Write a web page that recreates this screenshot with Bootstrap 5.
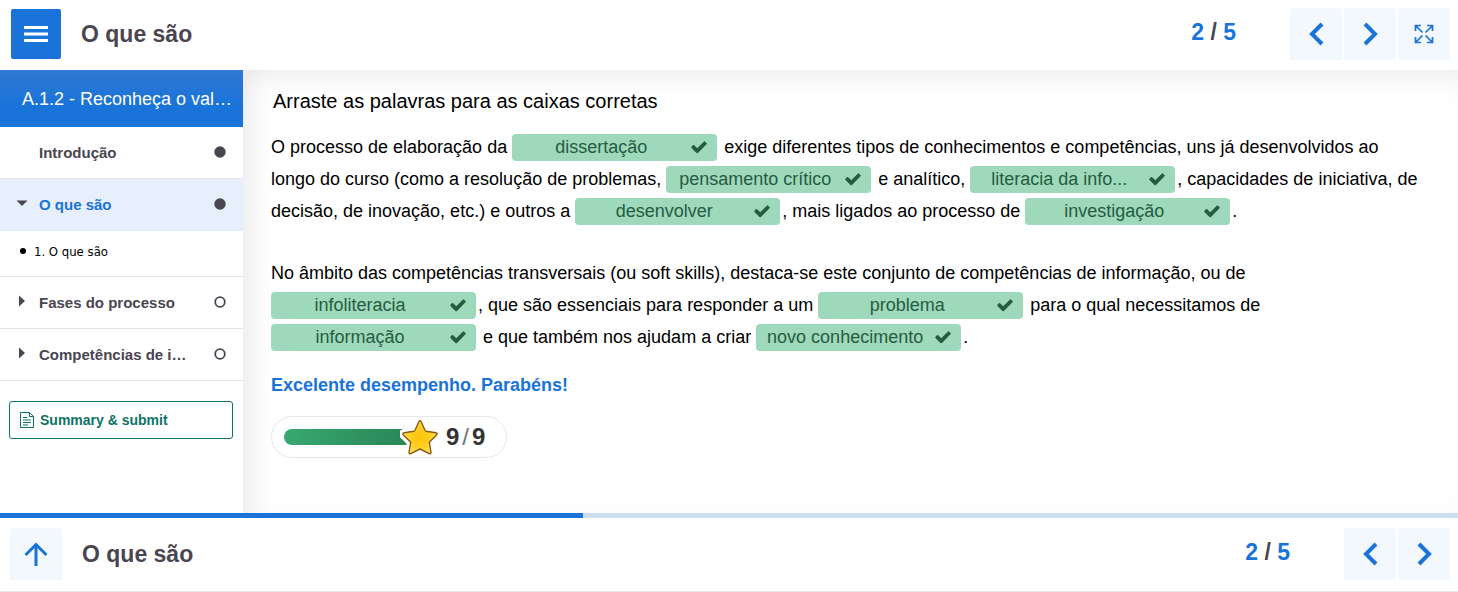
<!DOCTYPE html>
<html lang="pt">
<head>
<meta charset="utf-8">
<meta name="viewport" content="width=device-width, initial-scale=1">
<title>O que são</title>
<link href="https://cdn.jsdelivr.net/npm/bootstrap@5.3.0/dist/css/bootstrap.min.css" rel="stylesheet">
<style>
:root { --book-blue: #1a73d9; --book-ink: #4a4550; }
body { font-family: "Liberation Sans", Arial, sans-serif; color: #000; background: #fff; }
.book-title, .pager { font-size: 23px; line-height: 28px; font-weight: 700; color: var(--book-ink); }
.book-title { margin: 0 0 0 20px; }
.pager { margin: 0 54px 4px 0; }
.pager b { color: var(--book-blue); }
.topbar { height: 70px; padding: 0 8px 2px 11px; }
.bottombar { height: 74px; padding: 0 8px 1px 10px; border-bottom: 1px solid #e8e8e8; }
.menu-btn { width: 50px; height: 50px; background: var(--book-blue); border: 0; border-radius: 2px; }
.tool-btn { width: 52px; height: 52px; background: #f2f8fd; border: 0; border-radius: 3px; color: var(--book-blue); }
.side { width: 243px; background: #fff; }
.side-head { height: 57px; line-height: 58px; padding: 0 6px 0 22px; font-size: 18px; color: #fff; background: linear-gradient(#3079d2, #1a73d9 60%); }
.chapter { height: 52px; padding: 0 17px 0 16px; font-size: 15px; line-height: 24px; font-weight: 700; color: var(--book-ink); border-bottom: 1px solid #e4e4e4; text-decoration: none; }
.chapter .caret { width: 12px; margin-right: 11px; margin-bottom: 4px; }
.chapter .name { margin-right: 24px; }
.chapter.current { background: #e6effb; color: var(--book-blue); border-color: #e6effb; }
.section-link { height: 46px; padding: 0 20px 4px; font: 13px "DejaVu Sans Condensed", "DejaVu Sans", sans-serif; font-stretch: condensed; color: #000; border-bottom: 1px solid #e4e4e4; text-decoration: none; }
.submit-btn { height: 38px; margin: 20px 10px 0 9px; padding: 0 10px; font-size: 14px; font-weight: 700; color: #0e7366; background: #fff; border: 1px solid #0e7366; border-radius: 3px; gap: 6px; }
.page { padding: 17px 34px 55px 28px; box-shadow: inset 12px 10px 32px -8px #e6e6e6; }
.task { font-size: 20px; line-height: 28px; margin: 0 0 16px 2px; }
.cloze { font-size: 18px; line-height: 32px; margin: 0 0 30px; }
.drop { width: 205px; height: 27px; line-height: 27px; margin-right: 2px; background: #9fd9bb; color: #255c41; border-radius: 4px; vertical-align: middle; margin-top: -2px; }
.drop svg { margin-right: 9px; }
.feedback { font-size: 18px; line-height: 24px; font-weight: 700; color: var(--book-blue); margin: -10px 0 19px; }
.score { width: 236px; height: 42px; border: 1px solid #e8e8e8; border-radius: 21px; background: #fff; padding: 0 12px; }
.score-track { width: 136px; height: 16px; }
.score-fill { height: 16px; border-radius: 8px; background: linear-gradient(90deg, #38a871, #278355); }
.star { right: -20px; top: -12px; }
.score-text { font-size: 24px; line-height: 28px; font-weight: 700; color: #333; margin-left: 26px; gap: 3px; }
.reading { height: 5px; border-radius: 0; background: #cfdff2; }
.reading .progress-bar { background: var(--book-blue); }
</style>
</head>
<body>
<svg width="0" height="0" class="d-none" aria-hidden="true">
  <symbol id="tick" viewBox="0 0 1792 1792"><path fill="currentColor" d="M1671 566q0 40-28 68l-724 724-136 136q-28 28-68 28t-68-28l-136-136-362-362q-28-28-28-68t28-68l136-136q28-28 68-28t68 28l294 295 656-657q28-28 68-28t68 28l136 136q28 28 28 68z"/></symbol>
  <symbol id="prev" viewBox="0 0 24 24"><path d="M18 2 8 12l10 10" fill="none" stroke="currentColor" stroke-width="4"/></symbol>
  <symbol id="next" viewBox="0 0 24 24"><path d="M7 2l10 10L7 22" fill="none" stroke="currentColor" stroke-width="4"/></symbol>
</svg>

<header class="topbar d-flex align-items-center">
  <button class="menu-btn d-flex align-items-center justify-content-center" aria-label="Menu"><svg class="flex-shrink-0" width="24" height="18"><path d="M0 2.5h24M0 9h24M0 15.500h24" stroke="#fff" stroke-width="3"/></svg></button>
  <h1 class="book-title me-auto">O que são</h1>
  <div class="pager"><b>2</b> / <b>5</b></div>
  <div class="d-flex" style="gap:2px">
    <button class="tool-btn d-flex align-items-center justify-content-center p-0" aria-label="Anterior"><svg width="24" height="24"><use href="#prev"/></svg></button>
    <button class="tool-btn d-flex align-items-center justify-content-center p-0" aria-label="Seguinte"><svg width="24" height="24"><use href="#next"/></svg></button>
    <button class="tool-btn d-flex align-items-center justify-content-center p-0" aria-label="Ecrã inteiro"><svg width="20" height="20" fill="none" stroke="currentColor" stroke-width="1.700"><path d="M1.500 7V1.500H7M13 1.500h5.500V7M18.500 13v5.500H13M7 18.500H1.500V13M2 2l6.500 6.500M18 2l-6.500 6.500M18 18l-6.500-6.500M2 18l6.500-6.500"/></svg></button>
  </div>
</header>

<div class="d-flex align-items-stretch">
  <nav class="side flex-shrink-0">
    <div class="side-head text-nowrap">A.1.2 - Reconheça o val…</div>
    <a class="chapter d-flex align-items-center" href="#"><span class="caret"></span><span class="name flex-grow-1 text-nowrap">Introdução</span><svg class="flex-shrink-0" width="12" height="14"><circle cx="6" cy="6" r="5.700" fill="#4a4550"/></svg></a>
    <a class="chapter current d-flex align-items-center" href="#"><svg class="caret flex-shrink-0" width="12" height="12"><path d="M.5 3.500h11L6 9z" fill="#4a4550"/></svg><span class="name flex-grow-1 text-nowrap">O que são</span><svg class="flex-shrink-0" width="12" height="14"><circle cx="6" cy="6" r="5.700" fill="#4a4550"/></svg></a>
    <a class="section-link d-flex align-items-center" href="#"><svg class="me-2" width="6" height="8"><circle cx="3" cy="3" r="3"/></svg>1. O que são</a>
    <a class="chapter d-flex align-items-center" href="#"><svg class="caret flex-shrink-0" width="12" height="12"><path d="M3 .5v11L9 6z" fill="#4a4550"/></svg><span class="name flex-grow-1 text-nowrap">Fases do processo</span><svg class="flex-shrink-0" width="12" height="14"><circle cx="6" cy="6" r="4.800" fill="none" stroke="#4a4550" stroke-width="1.800"/></svg></a>
    <a class="chapter d-flex align-items-center" href="#"><svg class="caret flex-shrink-0" width="12" height="12"><path d="M3 .5v11L9 6z" fill="#4a4550"/></svg><span class="name flex-grow-1 text-nowrap">Competências de i…</span><svg class="flex-shrink-0" width="12" height="14"><circle cx="6" cy="6" r="4.800" fill="none" stroke="#4a4550" stroke-width="1.800"/></svg></a>
    <div class="d-grid"><button class="submit-btn d-flex align-items-center"><svg width="14" height="16" fill="none" stroke="currentColor"><path d="M.5.5h9l4 4v11H.5zM9.500.5v4h4M3 5.500h4M3 8h8M3 10.500h8M3 13h5"/></svg>Summary &amp; submit</button></div>
  </nav>

  <main class="page flex-grow-1">
    <p class="task">Arraste as palavras para as caixas corretas</p>
    <p class="cloze">O processo de elaboração da <span class="drop d-inline-flex align-items-center"><span class="flex-grow-1 text-center">dissertação</span><svg width="18" height="18"><use href="#tick"/></svg></span> exige diferentes tipos de conhecimentos e competências, uns já desenvolvidos ao longo do curso (como a resolução de problemas, <span class="drop d-inline-flex align-items-center"><span class="flex-grow-1 text-center">pensamento crítico</span><svg width="18" height="18"><use href="#tick"/></svg></span> e analítico, <span class="drop d-inline-flex align-items-center"><span class="flex-grow-1 text-center">literacia da info...</span><svg width="18" height="18"><use href="#tick"/></svg></span>, capacidades de iniciativa, de decisão, de inovação, etc.) e outros a <span class="drop d-inline-flex align-items-center"><span class="flex-grow-1 text-center">desenvolver</span><svg width="18" height="18"><use href="#tick"/></svg></span>, mais ligados ao processo de <span class="drop d-inline-flex align-items-center"><span class="flex-grow-1 text-center">investigação</span><svg width="18" height="18"><use href="#tick"/></svg></span>.</p>
    <p class="cloze">No âmbito das competências transversais (ou soft skills), destaca-se este conjunto de competências de informação, ou de <span class="drop d-inline-flex align-items-center"><span class="flex-grow-1 text-center">infoliteracia</span><svg width="18" height="18"><use href="#tick"/></svg></span>, que são essenciais para responder a um <span class="drop d-inline-flex align-items-center"><span class="flex-grow-1 text-center">problema</span><svg width="18" height="18"><use href="#tick"/></svg></span> para o qual necessitamos de <span class="drop d-inline-flex align-items-center"><span class="flex-grow-1 text-center">informação</span><svg width="18" height="18"><use href="#tick"/></svg></span> e que também nos ajudam a criar <span class="drop d-inline-flex align-items-center"><span class="flex-grow-1 text-center">novo conhecimento</span><svg width="18" height="18"><use href="#tick"/></svg></span>.</p>
    <p class="feedback">Excelente desempenho. Parabéns!</p>
    <div class="score d-flex align-items-center">
      <div class="score-track position-relative">
        <div class="score-fill" style="width:100%"></div>
        <svg class="star position-absolute" width="40" height="40" viewBox="0 0 40 40" stroke-linejoin="round">
          <defs><radialGradient id="gold"><stop offset="0" stop-color="#ffc20a"/><stop offset=".6" stop-color="#ffcf24"/><stop offset="1" stop-color="#ffdf60"/></radialGradient></defs>
          <path d="M20 4l4.700 9.500c.3.600.6.800 1.200.9l10 1.500c1.200.2 1.500 1.200.7 2.100l-7.300 7.200 1.700 10.300c.2 1.200-.7 1.800-1.800 1.300L20 32l-9.200 4.800c-1.100.5-2-.1-1.800-1.300l1.700-10.300L3.400 18c-.8-.9-.5-1.900.7-2.100l10-1.500c.6-.1.9-.3 1.200-.9z" fill="#fff" stroke="#fff" stroke-width="8"/>
          <path d="M19 4.500c.4-1 1.600-1 2 0l4 8.800c.3.600.6.900 1.200 1l9.700 1.500c1.300.2 1.600 1.300.7 2.200l-7.300 7.200 1.700 10.100c.2 1.300-.7 1.900-1.800 1.300L20 32l-9.200 4.600c-1.100.6-2 0-1.800-1.300l1.700-10.100L3.400 18c-.9-.9-.6-2 .7-2.200l9.700-1.500c.6-.1.900-.4 1.200-1z" fill="url(#gold)" stroke="#8a5c12" stroke-width="1.400"/>
        </svg>
      </div>
      <div class="score-text d-flex"><span>9</span><span class="fw-normal text-secondary">/</span><span>9</span></div>
    </div>
  </main>
</div>

<footer>
  <div class="progress reading" role="progressbar" aria-label="Progresso" aria-valuenow="40" aria-valuemin="0" aria-valuemax="100"><div class="progress-bar" style="width:40%"></div></div>
  <div class="bottombar d-flex align-items-center">
    <button class="tool-btn d-flex align-items-center justify-content-center p-0" aria-label="Topo"><svg width="24" height="24" fill="none" stroke="currentColor" stroke-width="3"><path d="M12 24V2.500M1.500 13 12 2.500 22.500 13"/></svg></button>
    <div class="book-title me-auto">O que são</div>
    <div class="pager"><b>2</b> / <b>5</b></div>
    <div class="d-flex" style="gap:2px">
      <button class="tool-btn d-flex align-items-center justify-content-center p-0" aria-label="Anterior"><svg width="24" height="24"><use href="#prev"/></svg></button>
      <button class="tool-btn d-flex align-items-center justify-content-center p-0" aria-label="Seguinte"><svg width="24" height="24"><use href="#next"/></svg></button>
    </div>
  </div>
</footer>
<script src="https://cdn.jsdelivr.net/npm/bootstrap@5.3.0/dist/js/bootstrap.bundle.min.js"></script>
</body>
</html>
